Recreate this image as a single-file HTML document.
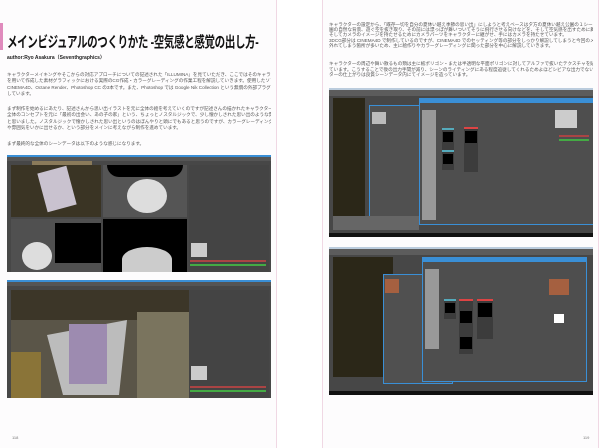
<!DOCTYPE html>
<html><head><meta charset="utf-8"><style>
*{margin:0;padding:0;box-sizing:border-box}
body{width:600px;height:448px;background:#fff;position:relative;overflow:hidden;font-family:"Liberation Sans","Noto Sans CJK JP",sans-serif}
.a{position:absolute}
.pg{position:absolute;top:0;height:448px;background:#fdfcfd}
.t{position:absolute;font-size:4.6px;line-height:6.4px;color:#555;white-space:nowrap;overflow:hidden}
.shot{position:absolute;background:#474747;overflow:hidden;border-top:2px solid #3a8fd6}
.bar{position:absolute;left:0;right:0;height:4px;background:#5a5a5a}
.win{position:absolute;background:#505050;border:1.5px solid #3a8fd6}
.node{position:absolute;background:#3c3c3c;border-top:2px solid #5ab}
.blk{position:absolute;background:#000}
</style></head><body>
<div class="pg" style="left:0;width:277px;border-right:1px solid #f0d8e4"></div>
<div class="pg" style="left:322px;width:277px;border-left:1px solid #f0d8e4;border-right:1px solid #f0d8e4"></div>
<div class="a" style="left:0;top:23px;width:3px;height:27px;background:#e08bbd"></div>
<div class="a" style="left:7px;top:31px;font-size:15px;font-weight:bold;color:#111;letter-spacing:-0.5px;white-space:nowrap;transform:scaleX(0.7);transform-origin:0 0">メインビジュアルのつくりかた -空気感と感覚の出し方-</div>
<div class="a" style="left:7px;top:54px;font-size:5px;font-weight:bold;color:#222;white-space:nowrap">author:Ryo Asakura（Seventhgraphics）</div>
<div class="t" style="left:7px;top:72px;width:264px">キャラクターメイキングやそこからの対応アプローチについての記述された「ILLUMINA」を見ていただき、ここではそのキャラクターイラスト<br>を用いて作成した素材グラフィックにおける実際のCG作成・カラーグレーディングの作業工程を解説していきます。使用したソフトウェアは<br>CINEMA4D、Octane Render、Photoshop CC の3本です。また、Photoshop では Google Nik Collection という無償の外部プラグインを使用<br>しています。</div>
<div class="t" style="left:7px;top:106px;width:264px">まず制作を始めるにあたり、記述さんから思い出イラストを元に全体の絵を考えていくのですが記述さんの描かれたキャラクターの世界観と今回の<br>全体のコンセプトを元に「最初の出会い、あの子の家」という、ちょっとノスタルジックで、少し懐かしされた思い出のような雰囲気を目指してみよう<br>と思いました。ノスタルジックで懐かしされた思い出というのはぼんやりと頭にでもあると思うのですが、カラーグレーディングの力によってその空気感<br>や雰囲気をいかに出せるか、という部分をメインに考えながら制作を進めています。</div>
<div class="t" style="left:7px;top:141px;width:264px">まず最終的な全体のシーンデータは以下のような感じになります。</div>

<div class="shot" style="left:7px;top:155px;width:264px;height:117px">
 <div class="bar" style="top:0;background:#555"></div>
 <div class="a" style="left:25px;top:4px;width:60px;height:4px;background:#8a7a5a"></div>
 <div class="a" style="left:4px;top:8px;width:90px;height:52px;background:#3a3424"></div>
 <div class="a" style="left:35px;top:12px;width:30px;height:40px;background:#c9c2cf;transform:rotate(-15deg)"></div>
 <div class="a" style="left:96px;top:8px;width:84px;height:52px;background:#555"></div>
 <div class="blk" style="left:100px;top:8px;width:76px;height:12px;border-radius:0 0 40px 40px"></div>
 <div class="a" style="left:120px;top:22px;width:40px;height:34px;background:#ddd;border-radius:50%"></div>
 <div class="a" style="left:4px;top:62px;width:90px;height:53px;background:#505050"></div>
 <div class="blk" style="left:48px;top:66px;width:46px;height:40px"></div>
 <div class="a" style="left:15px;top:85px;width:30px;height:28px;background:#ddd;border-radius:50%"></div>
 <div class="blk" style="left:96px;top:62px;width:84px;height:53px"></div>
 <div class="a" style="left:115px;top:90px;width:50px;height:25px;background:#ccc;border-radius:50% 50% 0 0"></div>
 <div class="a" style="left:182px;top:8px;width:80px;height:107px;background:#444"></div>
 <div class="a" style="left:183px;top:103px;width:76px;height:1.5px;background:#a44"></div>
 <div class="a" style="left:183px;top:107px;width:76px;height:1.5px;background:#4a4"></div>
 <div class="a" style="left:184px;top:86px;width:16px;height:14px;background:#ccc"></div>
</div>
<div class="shot" style="left:7px;top:280px;width:264px;height:118px">
 <div class="bar" style="top:0;background:#555"></div>
 <div class="a" style="left:4px;top:8px;width:178px;height:108px;background:#5a5548"></div>
 <div class="a" style="left:4px;top:8px;width:178px;height:30px;background:#3c3628"></div>
 <div class="a" style="left:40px;top:38px;width:80px;height:75px;background:#bcbcbc;clip-path:polygon(0 20%,100% 0,90% 100%,20% 100%)"></div>
 <div class="a" style="left:62px;top:42px;width:38px;height:60px;background:#9d8bb0"></div>
 <div class="a" style="left:130px;top:30px;width:52px;height:86px;background:#7a745e"></div>
 <div class="a" style="left:4px;top:70px;width:30px;height:46px;background:#8a7438"></div>
 <div class="a" style="left:182px;top:8px;width:80px;height:108px;background:#444"></div>
 <div class="a" style="left:184px;top:84px;width:16px;height:14px;background:#ccc"></div>
 <div class="a" style="left:183px;top:104px;width:76px;height:1.5px;background:#a44"></div>
 <div class="a" style="left:183px;top:108px;width:76px;height:1.5px;background:#4a4"></div>
</div>
<div class="a" style="left:12px;top:435px;font-size:4px;color:#777">118</div>

<div class="t" style="left:329px;top:22px;width:264px;line-height:5.2px">キャラクターの設定から、「既存一切を自分の夏休い越え季節の思い出」にしようと考えベースは夕方の夏休い越え公園の１シーンに決しました。公<br>園の自然な背景、遊ぐ空を抜き取り、その前には漂っぽが舞いついてそうに飛行させる向けなどを、そして空気感を出すために舞い散るもの数を配置しました。<br>そしてカメラのイメージを持たせるためにカメラパーツをキャラクターに継がせ、手にはカメラを持たせています。<br>3DCG部分は CINEMA4D で制作しているのですが、CINEMA4D でのセッティング等の部分をしっかり解説してしまうと今回のメインのコンセプトから<br>外れてしまう箇所が多いため、主に絵作りやカラーグレーディングに関った部分を中心に解説していきます。</div>
<div class="t" style="left:329px;top:61px;width:264px;line-height:5.5px">キャラクターの周辺や舞い散るもの類は主に板ポリゴン・または半透明な平面ポリゴンに対してアルファで抜いたテクスチャを貼ることで再現し<br>ています。こうすることで後の出力手間が減り、シーンのライティングにある程度追従してくれるためよほどシビアな出力でない限り、3Dキャラク<br>ターの仕上がりは良質シーンデータ内にてイメージを造っています。</div>

<div class="shot" style="left:329px;top:88px;width:264px;height:149px;border-top:2px solid #bcd">
 <div class="bar" style="top:0;height:6px;background:#5c5c5c"></div>
 <div class="a" style="left:4px;top:8px;width:32px;height:125px;background:#2b2718"></div>
 <div class="win" style="left:40px;top:15px;width:60px;height:115px"></div>
 <div class="a" style="left:43px;top:22px;width:14px;height:12px;background:#bbb"></div>
 <div class="win" style="left:90px;top:8px;width:180px;height:127px;background:#4e4e4e"></div>
 <div class="a" style="left:91px;top:9px;width:178px;height:4px;background:#3a8fd6"></div>
 <div class="a" style="left:93px;top:20px;width:14px;height:110px;background:#999"></div>
 <div class="node" style="left:113px;top:38px;width:12px;height:35px"><div class="blk" style="left:1px;top:2px;width:10px;height:10px"></div></div>
 <div class="node" style="left:113px;top:60px;width:12px;height:20px"><div class="blk" style="left:1px;top:2px;width:10px;height:10px"></div></div>
 <div class="node" style="left:135px;top:37px;width:14px;height:45px;border-color:#d44"><div class="blk" style="left:1px;top:2px;width:12px;height:12px"></div></div>
 <div class="a" style="left:226px;top:20px;width:22px;height:18px;background:#ccc"></div>
 <div class="a" style="left:230px;top:45px;width:30px;height:1.5px;background:#a44"></div>
 <div class="a" style="left:230px;top:49px;width:30px;height:1.5px;background:#4a4"></div>
 <div class="a" style="left:4px;top:126px;width:86px;height:14px;background:#666"></div>
 <div class="a" style="left:0;bottom:0;width:264px;height:4px;background:#111"></div>
</div>
<div class="shot" style="left:329px;top:247px;width:264px;height:148px;border-top:2px solid #bcd">
 <div class="bar" style="top:0;height:6px;background:#5c5c5c"></div>
 <div class="a" style="left:4px;top:8px;width:60px;height:120px;background:#2b2718"></div>
 <div class="win" style="left:54px;top:25px;width:70px;height:110px"></div>
 <div class="a" style="left:56px;top:30px;width:14px;height:14px;background:#a56040"></div>
 <div class="win" style="left:93px;top:8px;width:165px;height:125px;background:#4e4e4e"></div>
 <div class="a" style="left:94px;top:9px;width:163px;height:4px;background:#3a8fd6"></div>
 <div class="a" style="left:96px;top:20px;width:14px;height:80px;background:#999"></div>
 <div class="node" style="left:115px;top:50px;width:12px;height:20px"><div class="blk" style="left:1px;top:2px;width:10px;height:10px"></div></div>
 <div class="node" style="left:130px;top:50px;width:14px;height:55px;border-color:#d44"><div class="blk" style="left:1px;top:10px;width:12px;height:12px"></div><div class="blk" style="left:1px;top:36px;width:12px;height:12px"></div></div>
 <div class="node" style="left:148px;top:50px;width:16px;height:40px;border-color:#d44"><div class="blk" style="left:1px;top:2px;width:14px;height:14px"></div></div>
 <div class="a" style="left:220px;top:30px;width:20px;height:16px;background:#a56040"></div>
 <div class="a" style="left:225px;top:65px;width:10px;height:9px;background:#fff"></div>
 <div class="a" style="left:0;bottom:0;width:264px;height:4px;background:#111"></div>
</div>
<div class="a" style="left:583px;top:435px;font-size:4px;color:#777">119</div>
</body></html>
